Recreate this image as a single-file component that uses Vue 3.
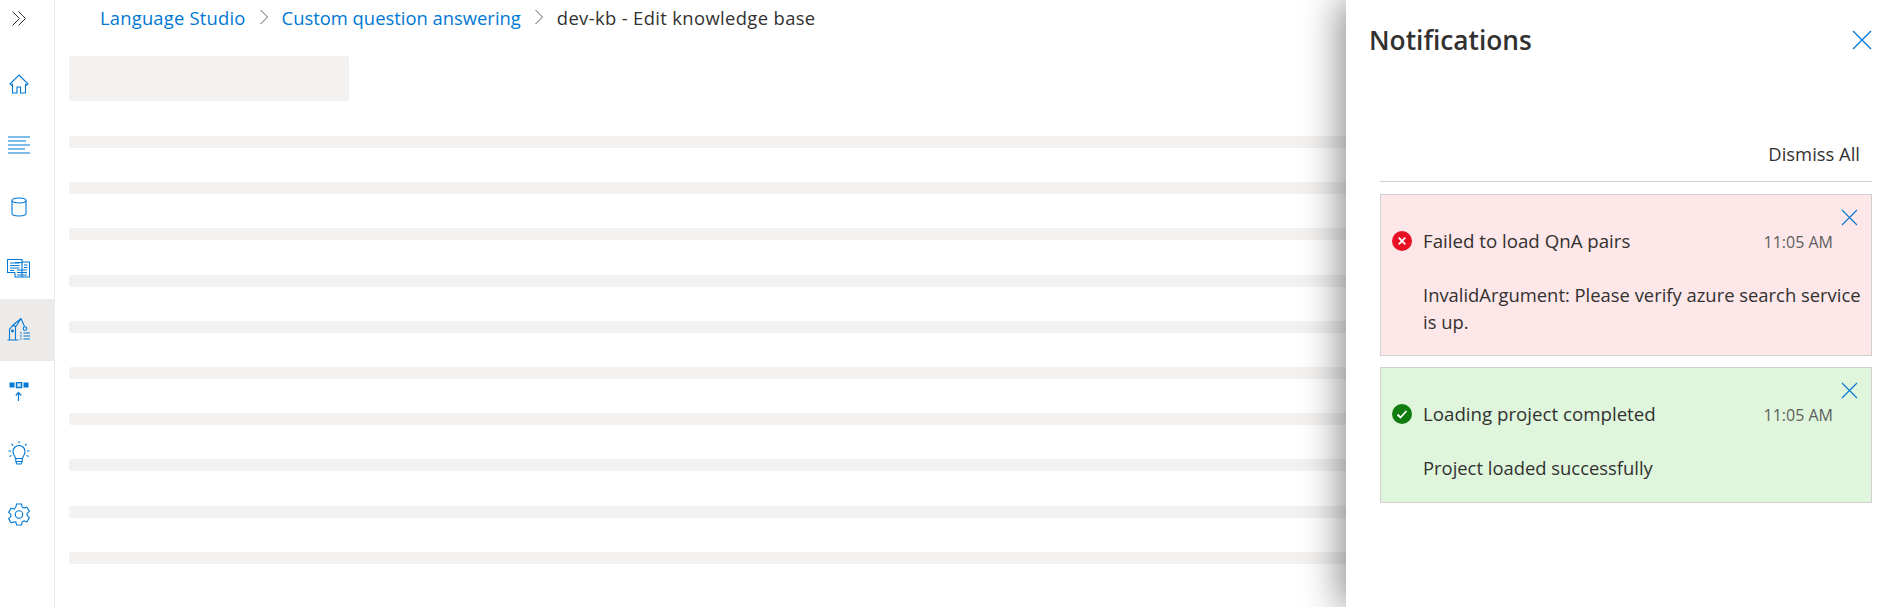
<script setup>
const navIcons = ['home', 'lines', 'db', 'book', 'robot', 'deploy', 'bulb', 'gear']
const lines = Array.from({ length: 10 })
const notifications = [
  { kind: 'error', title: 'Failed to load QnA pairs', time: '11:05 AM', body: 'InvalidArgument: Please verify azure search service is up.' },
  { kind: 'success', title: 'Loading project completed', time: '11:05 AM', body: 'Project loaded successfully' }
]
</script>

<template>
  <div class="app">
    <aside class="sidebar">
      <div class="collapse">
        <svg width="14" height="15" viewBox="0 0 14 15" fill="none" stroke="#323130" stroke-width="1"><path d="M.5.5l7 7-7 7M6.500.5l7 7-7 7" /></svg>
      </div>
      <div v-for="icon in navIcons" :key="icon" class="nav-item" :class="{ selected: icon === 'robot' }">
        <svg v-if="icon === 'home'" width="20" height="20" viewBox="0 0 20 20" fill="none" stroke="#0078d4" stroke-width="1.1"><path d="M1 10 10 1l9 9-1.800 1.200-.7-.7V19h-5v-6H8v6H3.500v-8.500l-.7.700Z" /></svg>
        <svg v-else-if="icon === 'lines'" width="24" height="18" viewBox="0 0 24 18" fill="none" stroke="#0078d4" stroke-width="1"><path d="M1 1h22M1 5h18M1 9h22M1 13h17M1 17h22" /></svg>
        <svg v-else-if="icon === 'db'" width="16" height="20" viewBox="0 0 16 20" fill="none" stroke="#0078d4" stroke-width="1.1"><ellipse cx="8" cy="3.500" rx="7" ry="2.500" /><path d="M1 3.500v13C1 18 4 19 8 19s7-1 7-2.500v-13" /></svg>
        <svg v-else-if="icon === 'book'" width="23" height="19" viewBox="0 0 23 19" fill="none" stroke="#0078d4" stroke-width="1.100"><path d="M15 3V.5H.5v13H8M15 3h7.500v15H8v-4.500M8 3.500h7v15" /><path d="M3 4h9.500M3 6.500h9.500M3 9h9.500M3 11.500h4M10 11h10M10 13.500h10M10 16h10M17 6h3.500M17 8.500h3.500" /></svg>
        <svg v-else-if="icon === 'robot'" width="23" height="23" viewBox="0 0 23 23" fill="none" stroke="#0078d4" stroke-width="1.100"><path d="M.5 22h11M2.500 22V11.500L5 8h3.500v14M5 8l9-7.500 3.500 8M14 .5l-5 8" /><circle cx="18" cy="10.500" r="1.800" /><circle cx="5.500" cy="13" r=".9" fill="#0078d4" /><path d="M13 15h1.800M16.500 15H23M13 18h1.800M16.500 18H23M13 21h1.800M16.500 21H23" /></svg>
        <svg v-else-if="icon === 'deploy'" width="20" height="19" viewBox="0 0 20 19" fill="#0078d4"><rect x="0.500" y="0.500" width="5" height="5" /><rect x="7.500" y="0.500" width="5" height="5" fill="#cfe6f8" stroke="#0078d4" stroke-width="1.500" /><rect x="14.500" y="0.500" width="5" height="5" /><path d="M9.500 19v-8M6.800 13.500 9.500 10.500l2.700 3" fill="none" stroke="#0078d4" stroke-width="1.200" /></svg>
        <svg v-else-if="icon === 'bulb'" width="22" height="24" viewBox="0 0 22 24" fill="none" stroke="#0078d4" stroke-width="1.100"><path d="M7.500 17.500c0-2-2.500-3.500-2.500-7a6 6 0 0 1 12 0c0 3.500-2.500 5-2.500 7ZM7.800 17.500v3L9 23h4l1.200-2.500v-3M7.800 20.500h6.400M11 0v2.300M3.500 3l1.500 1.500M18.500 3 17 4.500M.5 10H3M19 10h2.500M1.500 15.500l2-1M20.500 15.500l-2-1" /></svg>
        <svg v-else width="22" height="23" viewBox="0 0 22 23" fill="none" stroke="#0078d4" stroke-width="1.100"><circle cx="11" cy="11.500" r="3.700" /><path d="M8.500 1h5l.6 3 1.900 1.100 2.900-1 2.500 4.300-2.300 2a6 6 0 0 1 0 2.200l2.300 2-2.500 4.300-2.900-1-1.900 1.100-.6 3h-5l-.6-3L6 18.900l-2.900 1L.6 15.600l2.300-2a6 6 0 0 1 0-2.200l-2.300-2L3.100 5.100l2.900 1L7.900 4Z" /></svg>
      </div>
    </aside>

    <main class="main">
      <nav class="crumbs">
        <a class="first">Language Studio</a>
        <svg width="10" height="16" viewBox="0 0 10 16" fill="none" stroke="#605e5c"><path d="m1.500 1 7 7-7 7" /></svg>
        <a>Custom question answering</a>
        <svg width="10" height="16" viewBox="0 0 10 16" fill="none" stroke="#605e5c"><path d="m1.500 1 7 7-7 7" /></svg>
        <span>dev-kb - Edit knowledge base</span>
      </nav>
      <div class="skeleton-head"></div>
      <div class="skeleton-lines">
        <div v-for="(_, i) in lines" :key="i" class="skeleton-line"></div>
      </div>
    </main>

    <section class="panel">
      <header class="panel-head">
        <h2>Notifications</h2>
        <svg class="x-big" width="20" height="20" viewBox="0 0 20 20" fill="none" stroke="#0078d4" stroke-width="1.300"><path d="m1 1 18 18M19 1 1 19" /></svg>
      </header>
      <div class="dismiss">Dismiss All</div>
      <div class="cards">
        <article v-for="n in notifications" :key="n.title" class="card" :class="n.kind">
          <svg class="x-small" width="17" height="17" viewBox="0 0 17 17" fill="none" stroke="#0078d4" stroke-width="1.100"><path d="m1 1 15 15M16 1 1 16" /></svg>
          <div class="card-title">
            <svg v-if="n.kind === 'error'" width="20" height="20" viewBox="0 0 20 20"><circle cx="10" cy="10" r="10" fill="#e81123" /><path d="m6.700 6.700 6.600 6.600M13.300 6.700l-6.600 6.600" stroke="#fff" stroke-width="1.800" /></svg>
            <svg v-else width="20" height="20" viewBox="0 0 20 20"><circle cx="10" cy="10" r="10" fill="#107c10" /><path d="m5.500 10.500 3 3 6-6.500" fill="none" stroke="#fff" stroke-width="1.800" /></svg>
            <span class="title-text">{{ n.title }}</span>
            <span class="time">{{ n.time }}</span>
          </div>
          <p class="card-body">{{ n.body }}</p>
        </article>
      </div>
    </section>
  </div>
</template>

<style>
html, body { margin: 0; background: #fff; overflow: hidden; }
</style>

<style scoped>
.app {
  position: relative;
  display: flex;
  height: 607px;
  overflow: hidden;
  font-family: "Open Sans", "Noto Sans", sans-serif;
  color: #323130;
}
.sidebar {
  flex: 0 0 auto;
  width: 54px;
  border-right: 1px solid #edebe9;
}
.collapse {
  height: 37px;
  padding: 0 17px 16px 0;
  display: flex;
  align-items: center;
  justify-content: center;
}
.nav-item {
  height: 61.5px;
  padding-right: 17px;
  display: flex;
  align-items: center;
  justify-content: center;
}
.nav-item.selected { background: #edebe9; }
.main {
  flex: 1;
  min-width: 0;
  padding-left: 14px;
}
.crumbs {
  height: 34px;
  display: flex;
  align-items: center;
  gap: 13px;
  padding-left: 31px;
  font-size: 18.4px;
}
.crumbs a { color: #0078d4; }
.crumbs a.first { letter-spacing: 0.2px; }
.crumbs span { letter-spacing: 0.36px; }
.skeleton-head {
  width: 280px;
  height: 45px;
  margin-top: 22px;
  background: #f3f2f1;
  border-radius: 2px;
}
.skeleton-lines {
  display: flex;
  flex-direction: column;
  gap: 34.2px;
  margin-top: 35px;
}
.skeleton-line {
  height: 12px;
  background: #f3f2f1;
  border-radius: 2px;
}
.panel {
  position: absolute;
  top: 0;
  right: 0;
  bottom: 0;
  width: 557px;
  box-sizing: border-box;
  padding: 0 31px 0 23px;
  background: #fff;
  box-shadow: -6px 0 36px rgba(0, 0, 0, 0.45);
}
.panel-head {
  height: 79px;
  display: flex;
  align-items: center;
  justify-content: space-between;
}
.panel-head h2 {
  margin: 0;
  font-size: 26.3px;
  font-weight: 600;
}
.dismiss {
  margin-left: 11px;
  height: 103px;
  box-sizing: border-box;
  padding: 61px 12px 0 0;
  border-bottom: 1px solid #d2d0ce;
  text-align: right;
  font-size: 18.4px;
  line-height: 28px;
}
.cards {
  margin: 12px 0 0 11px;
  display: flex;
  flex-direction: column;
  gap: 11px;
}
.card {
  position: relative;
  box-sizing: border-box;
  padding: 23px 8px 14px 11px;
  border: 1px solid #d2d0ce;
  font-size: 18.4px;
}
.card.error { background: #fde7e9; height: 162px; }
.card.success { background: #dff6dd; height: 136px; }
.x-small {
  position: absolute;
  top: 14px;
  right: 13px;
}
.card-title {
  display: flex;
  align-items: center;
  height: 46px;
}
.title-text { margin: 0 0 2px 11px; flex: 1; font-size: 18.7px; }
.time { margin: 1px 30px 0 0; font-size: 16px; color: #605e5c; }
.card-body {
  margin: 17px 0 0 31px;
  line-height: 27px;
}
</style>
